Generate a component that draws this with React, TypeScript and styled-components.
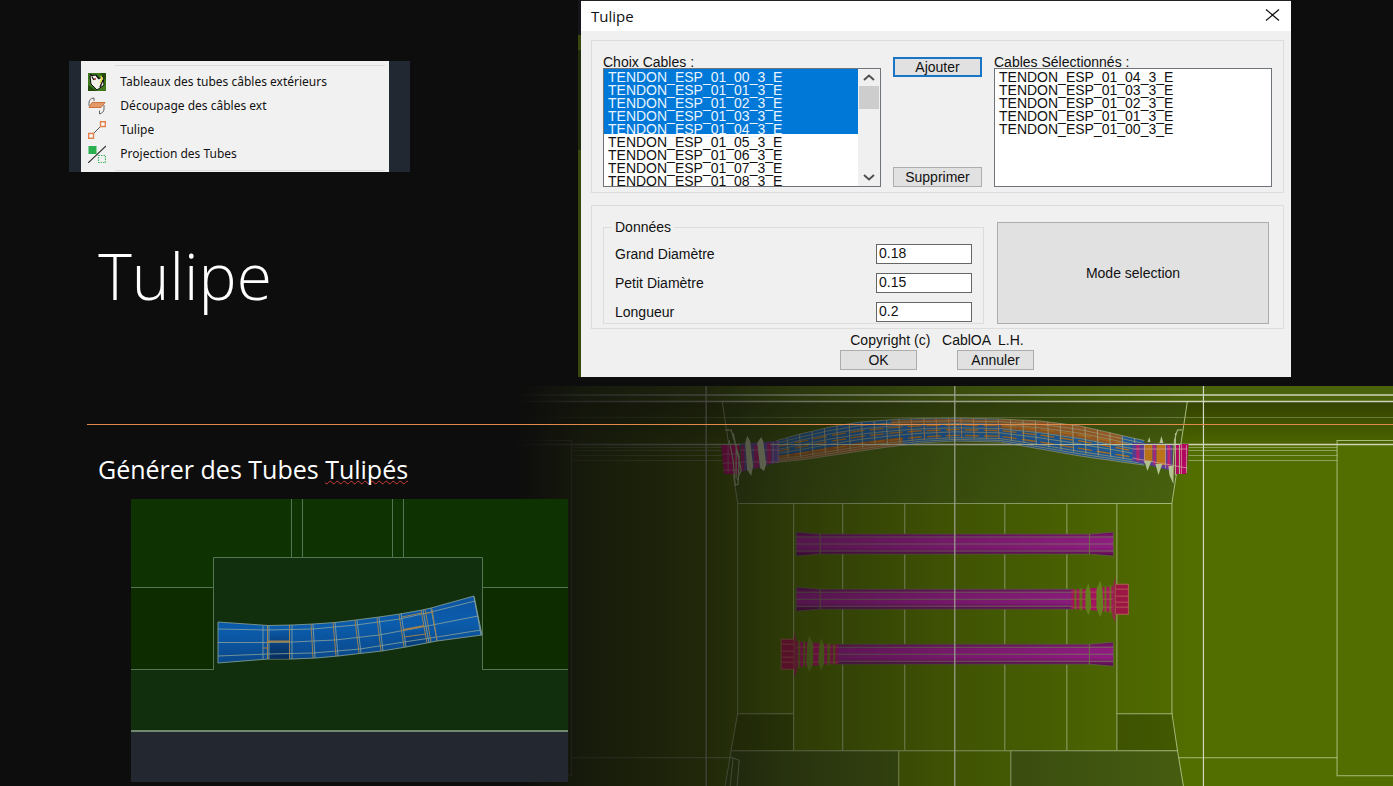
import React from 'react';
import styled, { createGlobalStyle, css } from 'styled-components';

const GlobalStyle = createGlobalStyle`
  *, *::before, *::after { box-sizing: border-box; }
  body { margin: 0; background: #0d0d0d; }
`;

const dialogFont = '"Liberation Sans", Arial, sans-serif';
const slideFont = '"Open Sans", "Noto Sans", sans-serif';

const Slide = styled.main`
  display: flex;
  flex-direction: column;
  min-height: 100vh;
  overflow: hidden;
  background: #0d0d0d;
  color: #fff;
  font-family: ${slideFont};
`;

const Top = styled.section`
  display: grid;
  grid-template-columns: 578fr 3px 710fr 102fr;
  padding-bottom: 9px;
`;

const Intro = styled.div`
  padding-top: 61px;
`;

const MenuShot = styled.nav`
  width: 59%;
  margin-left: 12%;
  padding: 0 21px 0 12px;
  background: #222831;
`;

const MenuList = styled.ul`
  margin: 0;
  padding: 9px 0 6px;
  height: 111px;
  list-style: none;
  background: linear-gradient(#dcdcdc, #dcdcdc) 34px 4px / 270px 1px no-repeat,
    linear-gradient(#dcdcdc, #dcdcdc) 34px 109px / 270px 1px no-repeat, #f1f1f1;
`;

const MenuItem = styled.li`
  display: flex;
  align-items: center;
  gap: 14px;
  height: 24px;
  padding-left: 7px;
`;

const MenuLink = styled.a`
  color: #111;
  font-family: "Noto Sans", sans-serif;
  font-size: 12px;
  line-height: 24px;
  text-decoration: none;
  white-space: nowrap;
`;

const Title = styled.h1`
  margin: 56px 0 0 17%;
  font-size: 64px;
  font-weight: 350;
  line-height: 96px;
`;

const WindowEdge = styled.div`
  background: linear-gradient(#15161a 0 35px, #39460d 35px 50px, #232c0c 50px 150px, #39460d 150px);
`;

const Dialog = styled.form`
  border-top: 1px solid #222;
  background: #f0f0f0;
  color: #111;
  font-family: ${dialogFont};
  font-size: 14px;
  line-height: 16px;
`;

const TitleBar = styled.header`
  display: flex;
  align-items: center;
  justify-content: space-between;
  height: 30px;
  padding: 0 11px 0 10px;
  background: #fff;
  font-family: ${slideFont};
  font-size: 15px;
`;

const CloseButton = styled.button`
  display: flex;
  padding: 0 0 2px;
  border: 0;
  background: none;
`;

const Group = styled.section`
  margin: 9px 7px 0 10px;
  border: 1px solid #dcdcdc;
`;

const CableGroup = styled(Group)`
  display: grid;
  grid-template-columns: 278fr 89px 278fr;
  gap: 12px;
  height: 153px;
  padding: 13px 11px 5px;
`;

const DataGroup = styled(Group)`
  display: grid;
  grid-template-columns: 381fr 272fr;
  gap: 13px;
  height: 124px;
  margin-top: 12px;
  padding: 13px 14px 4px 11px;
`;

const ListColumn = styled.div`
  display: flex;
  flex-direction: column;
  min-width: 0;
`;

const ListFrame = styled.div`
  display: flex;
  height: 119px;
  margin-top: -2px;
  border: 1px solid #6f747a;
  background: #fff;
`;

const ListBox = styled.select`
  flex: 1;
  min-width: 0;
  height: 117px;
  padding: 0;
  border: 0;
  border-radius: 0;
  outline: 0;
  overflow: hidden;
  background: #fff;
  font-family: ${dialogFont};
  font-size: 14px;
  scrollbar-width: none;

  option {
    height: 13px;
    min-height: 13px;
    padding: 0 4px;
    color: #111;
    line-height: 11px;
  }
  option:checked {
    background: #0078d7 linear-gradient(#0078d7, #0078d7);
    color: #e8f4ff;
  }
`;

const ScrollBar = styled.div`
  display: flex;
  flex-direction: column;
  align-items: center;
  width: 22px;
  padding: 0 1px;
  background: #f0f0f0;
`;

const ScrollThumb = styled.div`
  width: 20px;
  height: 23px;
  margin-bottom: auto;
  background: #cdcdcd;
`;

const ScrollArrow = styled.button`
  display: flex;
  align-items: center;
  justify-content: center;
  width: 20px;
  height: 17px;
  padding: 0;
  border: 0;
  background: none;
`;

const Actions = styled.div`
  display: flex;
  flex-direction: column;
  justify-content: space-between;
  padding-top: 3px;
`;

const Button = styled.button<{ $primary?: boolean; $wide?: boolean }>`
  height: 20px;
  padding: 0;
  border: 1px solid #adadad;
  border-radius: 0;
  background: #e1e1e1;
  color: #111;
  font: inherit;
  ${(p) => p.$wide && css`width: 77px;`}
  ${(p) => p.$primary && css`border: 2px solid #1975c5;`}
`;

const ModeButton = styled(Button)`
  height: 102px;
  margin-top: 3px;
`;

const Fieldset = styled.fieldset`
  min-width: 0;
  margin: 0;
  padding: 9px 11px 0;
  height: 105px;
  border: 1px solid #dcdcdc;

  legend {
    margin-left: -3px;
    padding: 0 3px;
  }
`;

const Field = styled.label`
  display: flex;
  align-items: center;
  justify-content: space-between;
  height: 20px;
  margin-bottom: 9px;
`;

const TextBox = styled.input`
  width: 96px;
  height: 20px;
  padding: 0 2px 2px;
  border: 1px solid #666;
  background: #fff;
  color: #111;
  font: inherit;
`;

const Footer = styled.footer`
  padding: 3px 0 7px 2px;
  text-align: center;
`;

const Copyright = styled.p`
  margin: 0 0 2px;
  white-space: pre;
`;

const FooterButtons = styled.div`
  display: flex;
  justify-content: center;
  gap: 40px;
`;

const Bottom = styled.section`
  position: relative;
  flex: 1;
  min-height: 400px;
  padding-top: 38px;
`;

const Backdrop = styled.svg`
  position: absolute;
  top: 0;
  right: 0;
  width: 63%;
  height: 100%;
`;

const Rule = styled.hr`
  position: relative;
  height: 1px;
  margin: 0 0 0 87px;
  border: 0;
  background: #e08a4c;
`;

const Subtitle = styled.h2`
  position: relative;
  margin: 26px 0 12px 98px;
  font-size: 25px;
  font-weight: 400;
  line-height: 36px;

  span {
    text-decoration: underline wavy #d23c3c 1px;
    text-underline-offset: 1px;
    text-decoration-skip-ink: none;
  }
`;

const DetailRow = styled.div`
  position: relative;
  display: grid;
  grid-template-columns: 131fr 437fr 825fr;
`;

const Detail = styled.svg`
  grid-column: 2;
  display: block;
  width: 100%;
`;

const TableIcon = () => (
  <svg width="18" height="18" viewBox="0 0 18 18">
    <rect width="18" height="18" fill="#3f7a1c" />
    <path d="M0 12 9 18H0zM12 0h6v8z" fill="#234d0c" />
    <path d="M2 3 8 2 11 6 15 3 16 12 9 17 3 11z" fill="#f2f2ea" stroke="#111" strokeWidth="1" />
    <path d="M4 4 6 7M12 14 15 7M2 1 5 3M8 2 11 6" fill="none" stroke="#111" strokeWidth="1.3" />
    <path d="M13 3 14 6 12 10" fill="none" stroke="#e3da35" strokeWidth="1.5" />
    <circle cx="7" cy="6" r="1" fill="#a33" />
  </svg>
);

const CutIcon = () => (
  <svg width="18" height="18" viewBox="0 0 18 18">
    <path d="M4 5.500H17L13 10.500H1z" fill="#e39a68" stroke="#c9733c" strokeWidth="1" />
    <path d="M1 9V6C1 3 3 1 6 1V4M16 8V12C16 15 14 16 11.500 17V13.500" fill="none" stroke="#666" strokeWidth="1" />
  </svg>
);

const TulipIcon = () => (
  <svg width="18" height="18" viewBox="0 0 18 18" fill="none">
    <path d="M5 13 13 5" stroke="#555" />
    <path d="M12.500 .7h4.800v4.800h-4.800zM.7 12.500h4.800v4.800H.7z" fill="#fff" stroke="#e0824a" strokeWidth="1.400" />
  </svg>
);

const ProjectionIcon = () => (
  <svg width="18" height="18" viewBox="0 0 18 18" fill="none">
    <rect width="8" height="8" y="1" x=".5" fill="#2bb050" />
    <path d="M0 18 18 1" stroke="#333" strokeWidth="1.2" />
    <path d="M10.500 10.500h7v7h-7z" stroke="#45b868" strokeWidth="1.200" strokeDasharray="1.500 1" />
  </svg>
);

const menu = [
  { label: 'Tableaux des tubes câbles extérieurs', Icon: TableIcon },
  { label: 'Découpage des câbles ext', Icon: CutIcon },
  { label: 'Tulipe', Icon: TulipIcon },
  { label: 'Projection des Tubes', Icon: ProjectionIcon },
];

const tendon = (n: number) => `TENDON_ESP_01_0${n}_3_E`;
const available = [0, 1, 2, 3, 4, 5, 6, 7, 8].map(tendon);
const chosen = [4, 3, 2, 1, 0].map(tendon);
const fields = [
  { label: 'Grand Diamètre', value: '0.18' },
  { label: 'Petit Diamètre', value: '0.15' },
  { label: 'Longueur', value: '0.2' },
];

/* Piecewise-linear profile through [x, y] knots. */
const profile = (knots: number[][]) => (x: number) => {
  const i = Math.max(1, knots.findIndex((k) => k[0] >= x));
  const [a, b] = [knots[i - 1], knots[i]];
  return a[1] + ((b[1] - a[1]) * (x - a[0])) / (b[0] - a[0]);
};
const archTop = profile([[768, 443], [800, 434], [830, 427], [860, 422], [900, 419], [955, 418], [1000, 419], [1040, 421], [1080, 426], [1115, 434], [1150, 442]]);
const archBottom = profile([[768, 463], [800, 460], [840, 454], [880, 448], [920, 443], [955, 441], [1000, 442], [1040, 449], [1080, 456], [1115, 461], [1150, 466]]);
const archXs = Array.from({ length: 65 }, (_, i) => 776 + i * 5.75);
const along = (t: number, from = 776, to = 1144) =>
  archXs
    .filter((x) => x >= from && x <= to)
    .map((x) => `${x.toFixed(1)},${(archTop(x) + (archBottom(x) - archTop(x)) * t).toFixed(1)}`);
const band = (t1: number, t2: number, from?: number, to?: number) =>
  [...along(t1, from, to), ...along(t2, from, to).reverse()].join(' ');

const Arch = () => (
  <g fill="none">
    <polygon points={band(0, 1)} fill="#1f60a3" />
    <polygon points={band(0.7, 1, 776, 905)} fill="#9a5a22" />
    <polygon points={band(0, 0.4, 1000, 1125)} fill="#a05f25" />
    <polygon points={band(0.04, 0.2, 890, 1060)} fill="#a0622a" />
    {[0.3, 0.5, 0.75].map((t) => (
      <polyline key={t} points={along(t).join(' ')} stroke="#b8741f" strokeWidth="1.4" strokeDasharray="14 5" />
    ))}
    {[0, 0.12, 0.24, 0.42, 0.6, 0.85, 0.93, 1].map((t) => (
      <polyline key={t} points={along(t).join(' ')} stroke="#a3a378" strokeWidth=".8" />
    ))}
    {Array.from({ length: 29 }, (_, i) => 787 + i * 12.4).map((x) => (
      <path key={x} d={`M${x} ${archTop(x)}L${x + 1} ${archBottom(x) - 3}`} stroke={x > 900 && x < 1010 ? '#d8904a' : '#b3ae82'} strokeWidth=".9" />
    ))}
  </g>
);

const LeftAnchor = () => (
  <g>
    <path d="M740 444 779 441V462L741 472z" fill="#6a52a8" />
    <path d="M754 445h5v23h-5zM767 443h4v21h-4zM741 446h3v25h-3z" fill="#c02078" />
    <path d="M721 445H739V474H724z" fill="#e00a7c" />
    <path d="M722 463H740M723 470H740M722 454H740M728 445V473M740 450H779M740 462H778M773 442V463M778 441V463" stroke="#d89ab0" strokeWidth=".7" />
    <path d="M745 443 747 436 750 441 753 466 751 476 747 470zM757 443 761 437 763 441 766 464 764 471 760 468z" fill="#ccd6a4" />
    <path d="M725 430H731L739 457 738 484 735 485 733 460 729 440M733 433 741 470 737 480M736 444V478" fill="none" stroke="#ccd6a4" strokeWidth="1.2" />
  </g>
);

const RightAnchor = () => (
  <g>
    <path d="M1132 443 1172 444V471L1132 461z" fill="#5b3f9a" />
    <path d="M1144 444h8v18h-8zM1156 445h9v20h-9z" fill="#c17718" />
    <path d="M1136 444h3v17h-3zM1153 445h2v20h-2zM1167 445h3v23h-3z" fill="#c02374" />
    <path d="M1174 444H1188L1186 474H1174z" fill="#b30561" />
    <path d="M1132 449H1187M1132 458 1187 468M1144 444V463M1165 444V468M1181 444V474M1186 445V473" stroke="#d2a0a0" strokeWidth=".8" />
    <path d="M1147 442 1149 437 1150 442zM1159 443 1161 436 1163 443zM1144 461H1151L1147 471zM1155 464H1162L1158 475zM1168 466H1173V484L1169 475z" fill="#b8c996" />
    <path d="M1182 430H1177L1174 440 1172 482M1175 433V475M1179 444V474" fill="none" stroke="#b2c18e" strokeWidth="1" />
  </g>
);

/* A straight tube; each end is either flared (tulip) or squared off. */
const Tube = ({ y, x1, x2, flareLeft, flareRight }: { y: number; x1: number; x2: number; flareLeft?: boolean; flareRight?: boolean }) => {
  const l = flareLeft ? 2 : 0;
  const r = flareRight ? 2 : 0;
  return (
    <g>
      <path
        d={`M${x1} ${y - 10 - l}L${x1 + 24} ${y - 10}H${x2 - 24}L${x2} ${y - 10 - r}V${y + 10 + r}L${x2 - 24} ${y + 10}H${x1 + 24}L${x1} ${y + 10 + l}z`}
        fill="url(#tube)"
        stroke="#6a6850"
        strokeWidth=".8"
      />
      <path d={`M${x1} ${y - 7}H${x2}M${x1} ${y}H${x2}M${x1} ${y + 7}H${x2}`} stroke="#8a6f70" strokeWidth="1" />
      {flareLeft && <path d={`M${x1 + 24} ${y - 10}V${y + 10}`} stroke="#7d7850" />}
      {flareRight && <path d={`M${x2 - 24} ${y - 10}V${y + 10}`} stroke="#7d7850" />}
    </g>
  );
};

/* Anchor head with its plate and fins, drawn pointing right from the origin. */
const AnchorHead = () => (
  <g>
    <path d="M0-10H10L42-13V13L10 10H0z" fill="#b51668" />
    <path d="M3-10h2v20h-2zM8-11h3v22H8zM33-13h2v26h-2zM38-14h2v28h-2z" fill="#6c7a18" />
    <path d="M0-7H42M0 0H42M0 8H42" stroke="#b9645a" strokeWidth=".8" />
    <path d="M14-9 17-16 19-9 20 8 17 16 14 9zM25-10 29-19 31-10 32 9 29 18 25 9z" fill="#6f8d1f" />
    <path d="M44-15H57V15H44z" fill="#a81748" stroke="#b26b50" strokeWidth="1" />
    <path d="M44-10H57M44-3H57M44 8H57M44 3H57" stroke="#ca6a62" strokeWidth=".8" />
    <path d="M42-15 44-23V23L41 17z" fill="#a22b50" />
  </g>
);

const Bridge = () => (
  <Backdrop viewBox="515 386 877 400" preserveAspectRatio="xMaxYMin slice" aria-hidden="true">
    <defs>
      <linearGradient id="fade" gradientUnits="userSpaceOnUse" x1="516" x2="1190" y1="0" y2="0">
        <stop offset="0" stopColor="#0d0d0d" />
        <stop offset=".1" stopColor="#0d0d0d" stopOpacity=".86" />
        <stop offset=".28" stopColor="#0d0d0d" stopOpacity=".72" />
        <stop offset=".41" stopColor="#0d0d0d" stopOpacity=".52" />
        <stop offset=".65" stopColor="#0d0d0d" stopOpacity=".27" />
        <stop offset="1" stopColor="#0d0d0d" stopOpacity="0" />
      </linearGradient>
      <linearGradient id="deck" x1="0" x2="0" y1="0" y2="1">
        <stop offset="0" stopColor="#334100" />
        <stop offset="1" stopColor="#4b6400" />
      </linearGradient>
      <linearGradient id="vault" x1="0" x2="0" y1="0" y2="1">
        <stop offset="0" stopColor="#36480a" />
        <stop offset=".5" stopColor="#46600e" />
        <stop offset="1" stopColor="#48620e" />
      </linearGradient>
      <linearGradient id="tube" x1="0" x2="0" y1="0" y2="1">
        <stop offset="0" stopColor="#6b0f5c" />
        <stop offset=".3" stopColor="#9c1e8c" />
        <stop offset=".65" stopColor="#9c1e8c" />
        <stop offset="1" stopColor="#5a0a4c" />
      </linearGradient>
    </defs>
    <rect x="515" y="386" width="878" height="400" fill="#526d00" />
    <rect x="515" y="386" width="878" height="15" fill="#4a620c" />
    <rect x="515" y="401" width="878" height="43" fill="url(#deck)" />
    <path d="M722 401H1187L1172 503H737z" fill="url(#vault)" />
    <path d="M737 713H793V750H731zM1116 713H1172L1177 750H1116z" fill="#435900" />
    <path d="M731 750H898V786H725zM1010 750H1177L1183 786H1010z" fill="#465d10" />
    <g fill="none" stroke="#a9bc7b" strokeWidth="1">
      <path d="M516 417.500H1393" stroke="#6c7a3c" />
      <path d="M572 447.500H722M572 450.500H722M572 455.500H722M572 460.500H722M1188 447.500H1337M1188 450.500H1337M1188 455.500H1337M1188 460.500H1337" stroke="#8fa05c" />
      <path d="M516 440.500H571.500V775.500H516M1393 440.500H1336.500V775.500H1393" />
      <path d="M722 401 737.500 503V713L731 750 725 786M1187 401 1171.500 503V713L1177 750 1183 786M737 503.500H1172" />
      <path d="M793.500 503V750M842.500 503V750M904.500 503V750M1004.500 503V750M1066.500 503V750M1116.500 503V750M898.500 750V786M1010.500 750V786" />
      <path d="M737 713.500H793M1116 713.500H1172M731 750.500H1177M572 757.500H731M1178 757.500H1337M731 757 739 760 737 786M733 757 730 786" />
    </g>
    <path d="M516 395H1393M516 401.500H1393M516 444.500H1393" stroke="#cdd3b8" strokeWidth="1.400" />
    <Arch />
    <LeftAnchor />
    <RightAnchor />
    <path d="M770 444.500H1180" stroke="#c8ccb0" strokeWidth="1" />
    <Tube y={544} x1={796} x2={1113} flareLeft flareRight />
    <Tube y={599} x1={796} x2={1072} flareLeft />
    <Tube y={654} x1={837} x2={1113} flareRight />
    <g transform="translate(1071 599)"><AnchorHead /></g>
    <g transform="translate(838 654) scale(-1 1)"><AnchorHead /></g>
    <path d="M706 386V786M954.500 386V786M1203 386V786" stroke="#d3d8c4" strokeWidth="1.200" />
    <rect x="515" y="386" width="878" height="400" fill="url(#fade)" />
  </Backdrop>
);

const TubeDetail = () => (
  <Detail viewBox="131 499 437 283" role="img" aria-label="Tube tulipé">
    <defs>
      <linearGradient id="blue" x1="0" x2=".15" y1="0" y2="1">
        <stop offset="0" stopColor="#0c509c" />
        <stop offset=".5" stopColor="#0b5cac" />
        <stop offset="1" stopColor="#0a4789" />
      </linearGradient>
      <linearGradient id="shade" x1="0" x2="0" y1="0" y2="1">
        <stop offset=".4" stopColor="#05244a" stopOpacity="0" />
        <stop offset="1" stopColor="#05244a" stopOpacity=".75" />
      </linearGradient>
    </defs>
    <rect x="131" y="499" width="437" height="283" fill="#112f0d" />
    <path d="M131 499H568V587H482V557H213V587H131z" fill="#0f3202" />
    <path d="M131 587H213V669H131zM482 587H568V669H482z" fill="#0d2d00" />
    <rect x="131" y="731" width="437" height="51" fill="#232830" />
    <g fill="none" stroke="#557654" strokeWidth="1">
      <path d="M291.500 499V557M302.500 499V557M392.500 499V557M403.500 499V557" />
      <path d="M131 587.500H213M131 669.500H213.500V557.500H482.500V669.500H568M482 587.500H568" />
    </g>
    <path d="M131 731H568" stroke="#6f8a70" strokeWidth="2" />
    <path
      d="M218 622 268 625.500 292 625 313 624 335 622.500 356 620 379 617 400 614 422 610 431 608 474 596 482 635 437 641 406 647 382 651 360 653.500 338 656 316 658 292 659 268 659 218 663z"
      fill="url(#blue)"
      stroke="#7d9a94"
      strokeWidth=".9"
    />
    <path d="M269 625H290V659H269zM402 613 422 610 428 642 406 646z" fill="url(#shade)" />
    <g fill="none" stroke="#8aa39a" strokeWidth=".8">
      <path d="M218 642.500H268L292 642 335 640 379 635 422 627 478 616" />
      <path d="M218 629 268 630 313 629 356 625 400 619 431 612 475 601" />
      <path d="M218 656 268 654 313 653 360 649 404 642 437 637 481 630" />
      <path d="M263 626V659M269 626V659M292 625V659M313 624 315 658M335 622 338 656M357 620 361 653M379 617 383 651M401 613 406 647M423 610 429 643M431 608 437 641M474 597 481 635" />
    </g>
    <g fill="none" stroke="#9d814e" strokeWidth="1">
      <path d="M267.500 625V659M289.500 625V659M311 624 313 658M333 622 336 656M355 620 359 653M377 618 381 651M399 614 404 647M421 610 427 643M425 609 431 642M432 609 437 641" />
      <path d="M263 648H268M402 617 422 613M404 637 426 634M424 614 432 612" />
      <path d="M268 641.500H290M403 630 424 626" strokeWidth="2" />
    </g>
  </Detail>
);

export default function App() {
  return (
    <Slide>
      <GlobalStyle />
      <Top>
        <Intro>
          <MenuShot>
            <MenuList>
              {menu.map(({ label, Icon }) => (
                <MenuItem key={label}>
                  <Icon />
                  <MenuLink href="#tulipe">{label}</MenuLink>
                </MenuItem>
              ))}
            </MenuList>
          </MenuShot>
          <Title id="tulipe">Tulipe</Title>
        </Intro>
        <WindowEdge />
        <Dialog onSubmit={(e) => e.preventDefault()}>
          <TitleBar>
            <span>Tulipe</span>
            <CloseButton type="button" aria-label="Fermer">
              <svg width="15" height="12" viewBox="0 0 15 12">
                <path d="M1 .5 14 11.500M14 .5 1 11.500" stroke="#111" strokeWidth="1.200" />
              </svg>
            </CloseButton>
          </TitleBar>
          <CableGroup>
            <ListColumn>
              <label htmlFor="cables">Choix Cables :</label>
              <ListFrame>
                <ListBox id="cables" multiple size={9} defaultValue={available.slice(0, 5)}>
                  {available.map((name) => <option key={name}>{name}</option>)}
                </ListBox>
                <ScrollBar>
                  <ScrollArrow type="button" aria-label="Monter">
                    <svg width="12" height="7" viewBox="0 0 12 7"><path d="M1 6 6 1.500 11 6" fill="none" stroke="#505050" strokeWidth="2" /></svg>
                  </ScrollArrow>
                  <ScrollThumb />
                  <ScrollArrow type="button" aria-label="Descendre">
                    <svg width="12" height="7" viewBox="0 0 12 7"><path d="M1 1 6 5.500 11 1" fill="none" stroke="#505050" strokeWidth="2" /></svg>
                  </ScrollArrow>
                </ScrollBar>
              </ListFrame>
            </ListColumn>
            <Actions>
              <Button type="button" $primary>Ajouter</Button>
              <Button type="button">Supprimer</Button>
            </Actions>
            <ListColumn>
              <label htmlFor="selected">Cables Sélectionnés :</label>
              <ListFrame>
                <ListBox id="selected" multiple size={9}>
                  {chosen.map((name) => <option key={name}>{name}</option>)}
                </ListBox>
              </ListFrame>
            </ListColumn>
          </CableGroup>
          <DataGroup>
            <Fieldset>
              <legend>Données</legend>
              {fields.map(({ label, value }) => (
                <Field key={label}>
                  {label}
                  <TextBox type="text" defaultValue={value} />
                </Field>
              ))}
            </Fieldset>
            <ModeButton type="button">Mode selection</ModeButton>
          </DataGroup>
          <Footer>
            <Copyright>{'Copyright (c)   CablOA  L.H.'}</Copyright>
            <FooterButtons>
              <Button type="submit" $wide>OK</Button>
              <Button type="button" $wide>Annuler</Button>
            </FooterButtons>
          </Footer>
        </Dialog>
      </Top>
      <Bottom>
        <Bridge />
        <Rule />
        <Subtitle>Générer des Tubes <span>Tulipés</span></Subtitle>
        <DetailRow>
          <TubeDetail />
        </DetailRow>
      </Bottom>
    </Slide>
  );
}
